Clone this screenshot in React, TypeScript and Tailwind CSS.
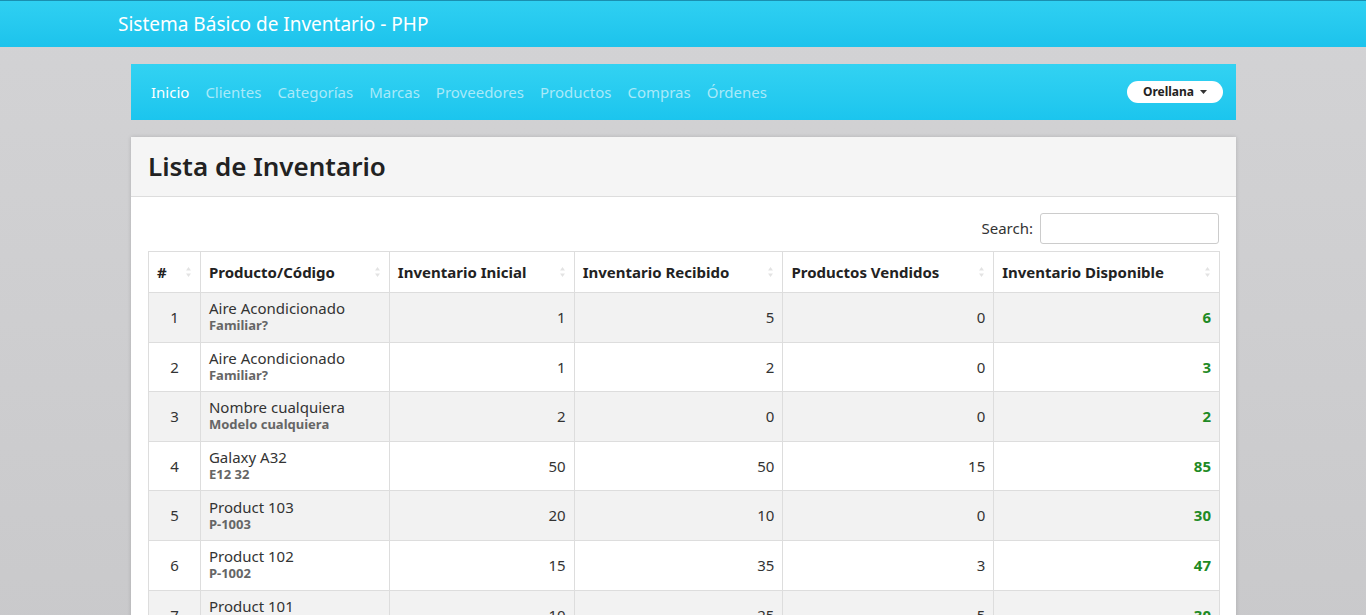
import React from 'react'

const font = { fontFamily: '"Noto Sans", "Open Sans", Arial, sans-serif' }

const navItems = ['Inicio', 'Clientes', 'Categorías', 'Marcas', 'Proveedores', 'Productos', 'Compras', 'Órdenes']

const rows = [
  { n: 1, name: 'Aire Acondicionado', code: 'Familiar?', ini: 1, rec: 5, ven: 0, disp: 6 },
  { n: 2, name: 'Aire Acondicionado', code: 'Familiar?', ini: 1, rec: 2, ven: 0, disp: 3 },
  { n: 3, name: 'Nombre cualquiera', code: 'Modelo cualquiera', ini: 2, rec: 0, ven: 0, disp: 2 },
  { n: 4, name: 'Galaxy A32', code: 'E12 32', ini: 50, rec: 50, ven: 15, disp: 85 },
  { n: 5, name: 'Product 103', code: 'P-1003', ini: 20, rec: 10, ven: 0, disp: 30 },
  { n: 6, name: 'Product 102', code: 'P-1002', ini: 15, rec: 35, ven: 3, disp: 47 },
  { n: 7, name: 'Product 101', code: 'P-1001', ini: 10, rec: 25, ven: 5, disp: 30 },
]

function SortIcon() {
  return (
    <svg width="7" height="12" viewBox="0 0 7 12" className="flex-none">
      <path d="M3.5 1 L6 4.5 L1 4.5 Z" fill="#e3e3e3" />
      <path d="M3.5 11 L6 7.5 L1 7.5 Z" fill="#e3e3e3" />
    </svg>
  )
}

function Th({ label, w }: { label: string; w: string }) {
  return (
    <th className={`${w} border border-[#ddd] px-2 h-[41px] text-left`}>
      <div className="flex items-center justify-between">
        <span className="font-bold text-[15px] text-[#222]">{label}</span>
        <SortIcon />
      </div>
    </th>
  )
}

export default function App() {
  return (
    <div className="min-h-[615px] bg-gradient-to-b from-[#d3d3d5] to-[#c9c9cb] text-[#333]" style={font}>
      <div className="h-[47px] border-t border-[#1a8fb0] bg-gradient-to-b from-[#2fd0f2] to-[#1cc3ec] flex items-center pl-[118px]">
        <span className="text-white text-[19px]">Sistema Básico de Inventario - PHP</span>
      </div>

      <div className="mx-[131px] mt-[17px] w-[1105px]">
        <div className="h-[56px] bg-gradient-to-b from-[#32d2f2] to-[#1bc5ee] flex items-center pl-[20px] pr-[13px]">
          <nav className="flex gap-[16px] text-[15px]">
            {navItems.map((n, i) => (
              <span key={n} className={i === 0 ? 'text-white' : 'text-[#a9e9f9]'}>{n}</span>
            ))}
          </nav>
          <button className="ml-auto h-[22px] px-[16px] rounded-full bg-white text-[12px] font-bold text-[#222] flex items-center gap-[6px]">
            Orellana
            <svg width="7" height="4" viewBox="0 0 7 4"><path d="M0 0 L7 0 L3.5 4 Z" fill="#333" /></svg>
          </button>
        </div>

        <div className="mt-[17px] bg-white shadow-[0_0_4px_rgba(0,0,0,0.15)]">
          <div className="h-[60px] bg-[#f5f5f5] border-b border-[#ddd] flex items-center px-[17px]">
            <h1 className="text-[26px] font-semibold text-[#222]">Lista de Inventario</h1>
          </div>
          <div className="px-[17px] pt-[16px]">
            <div className="flex justify-end items-center gap-[7px] mb-[7px]">
              <span className="text-[15px] text-[#333]">Search:</span>
              <input className="w-[179px] h-[31px] border border-[#ccc] rounded-[3px] bg-white" />
            </div>
            <table className="w-[1072px] border-collapse">
              <thead>
                <tr>
                  <Th label="#" w="w-[52px]" />
                  <Th label="Producto/Código" w="w-[189px]" />
                  <Th label="Inventario Inicial" w="w-[185px]" />
                  <Th label="Inventario Recibido" w="w-[209px]" />
                  <Th label="Productos Vendidos" w="w-[211px]" />
                  <Th label="Inventario Disponible" w="w-[226px]" />
                </tr>
              </thead>
              <tbody>
                {rows.map((r, i) => (
                  <tr key={r.n} className={i % 2 === 0 ? 'bg-[#f2f2f2]' : 'bg-white'}>
                    <td className="border border-[#ddd] h-[49.6px] text-center text-[15px]">{r.n}</td>
                    <td className="border border-[#ddd] px-2 leading-[17px]">
                      <div className="text-[15px] text-[#333]">{r.name}</div>
                      <div className="text-[13px] font-bold text-[#666]">{r.code}</div>
                    </td>
                    <td className="border border-[#ddd] px-2 text-right text-[15px]">{r.ini}</td>
                    <td className="border border-[#ddd] px-2 text-right text-[15px]">{r.rec}</td>
                    <td className="border border-[#ddd] px-2 text-right text-[15px]">{r.ven}</td>
                    <td className="border border-[#ddd] px-2 text-right text-[15px] font-bold text-[#1f8a25]">{r.disp}</td>
                  </tr>
                ))}
              </tbody>
            </table>
          </div>
        </div>
      </div>
    </div>
  )
}
